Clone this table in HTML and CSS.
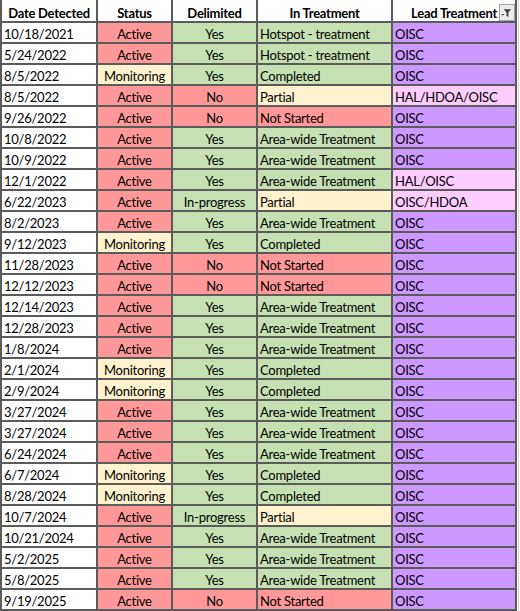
FILE: index.html
```html
<!DOCTYPE html>
<html lang="en">
<head>
<meta charset="utf-8">
<title>Detections</title>
<link rel="stylesheet" href="styles.css">
</head>
<body>
<div class="wrap">
<div class="sheet" role="table">
  <div class="cell head">Date Detected</div>
  <div class="cell head">Status</div>
  <div class="cell head">Delimited</div>
  <div class="cell head">In Treatment</div>
  <div class="cell head lead">Lead Treatment
    <span class="filter" aria-hidden="true"><svg width="16" height="17" viewBox="0 0 16 17"><path d="M2 10h4l-2 2z" fill="#555"/><path d="M5 5h8l-3 3.5v4.8l-2-1.2v-3.6z" fill="#3f3f3f"/></svg></span>
  </div>

  <div class="cell d">10/18/2021</div><div class="cell c red">Active</div><div class="cell c green">Yes</div><div class="cell l green">Hotspot - treatment</div><div class="cell l purple">OISC</div>
  <div class="cell d">5/24/2022</div><div class="cell c red">Active</div><div class="cell c green">Yes</div><div class="cell l green">Hotspot - treatment</div><div class="cell l purple">OISC</div>
  <div class="cell d">8/5/2022</div><div class="cell c yellow">Monitoring</div><div class="cell c green">Yes</div><div class="cell l green">Completed</div><div class="cell l purple">OISC</div>
  <div class="cell d">8/5/2022</div><div class="cell c red">Active</div><div class="cell c red">No</div><div class="cell l yellow">Partial</div><div class="cell l pink">HAL/HDOA/OISC</div>
  <div class="cell d">9/26/2022</div><div class="cell c red">Active</div><div class="cell c red">No</div><div class="cell l red">Not Started</div><div class="cell l purple">OISC</div>
  <div class="cell d">10/8/2022</div><div class="cell c red">Active</div><div class="cell c green">Yes</div><div class="cell l green">Area-wide Treatment</div><div class="cell l purple">OISC</div>
  <div class="cell d">10/9/2022</div><div class="cell c red">Active</div><div class="cell c green">Yes</div><div class="cell l green">Area-wide Treatment</div><div class="cell l purple">OISC</div>
  <div class="cell d">12/1/2022</div><div class="cell c red">Active</div><div class="cell c green">Yes</div><div class="cell l green">Area-wide Treatment</div><div class="cell l pink">HAL/OISC</div>
  <div class="cell d">6/22/2023</div><div class="cell c red">Active</div><div class="cell c green">In-progress</div><div class="cell l yellow">Partial</div><div class="cell l pink">OISC/HDOA</div>
  <div class="cell d">8/2/2023</div><div class="cell c red">Active</div><div class="cell c green">Yes</div><div class="cell l green">Area-wide Treatment</div><div class="cell l purple">OISC</div>
  <div class="cell d">9/12/2023</div><div class="cell c yellow">Monitoring</div><div class="cell c green">Yes</div><div class="cell l green">Completed</div><div class="cell l purple">OISC</div>
  <div class="cell d">11/28/2023</div><div class="cell c red">Active</div><div class="cell c red">No</div><div class="cell l red">Not Started</div><div class="cell l purple">OISC</div>
  <div class="cell d">12/12/2023</div><div class="cell c red">Active</div><div class="cell c red">No</div><div class="cell l red">Not Started</div><div class="cell l purple">OISC</div>
  <div class="cell d">12/14/2023</div><div class="cell c red">Active</div><div class="cell c green">Yes</div><div class="cell l green">Area-wide Treatment</div><div class="cell l purple">OISC</div>
  <div class="cell d">12/28/2023</div><div class="cell c red">Active</div><div class="cell c green">Yes</div><div class="cell l green">Area-wide Treatment</div><div class="cell l purple">OISC</div>
  <div class="cell d">1/8/2024</div><div class="cell c red">Active</div><div class="cell c green">Yes</div><div class="cell l green">Area-wide Treatment</div><div class="cell l purple">OISC</div>
  <div class="cell d">2/1/2024</div><div class="cell c yellow">Monitoring</div><div class="cell c green">Yes</div><div class="cell l green">Completed</div><div class="cell l purple">OISC</div>
  <div class="cell d">2/9/2024</div><div class="cell c yellow">Monitoring</div><div class="cell c green">Yes</div><div class="cell l green">Completed</div><div class="cell l purple">OISC</div>
  <div class="cell d">3/27/2024</div><div class="cell c red">Active</div><div class="cell c green">Yes</div><div class="cell l green">Area-wide Treatment</div><div class="cell l purple">OISC</div>
  <div class="cell d">3/27/2024</div><div class="cell c red">Active</div><div class="cell c green">Yes</div><div class="cell l green">Area-wide Treatment</div><div class="cell l purple">OISC</div>
  <div class="cell d">6/24/2024</div><div class="cell c red">Active</div><div class="cell c green">Yes</div><div class="cell l green">Area-wide Treatment</div><div class="cell l purple">OISC</div>
  <div class="cell d">6/7/2024</div><div class="cell c yellow">Monitoring</div><div class="cell c green">Yes</div><div class="cell l green">Completed</div><div class="cell l purple">OISC</div>
  <div class="cell d">8/28/2024</div><div class="cell c yellow">Monitoring</div><div class="cell c green">Yes</div><div class="cell l green">Completed</div><div class="cell l purple">OISC</div>
  <div class="cell d">10/7/2024</div><div class="cell c red">Active</div><div class="cell c green">In-progress</div><div class="cell l yellow">Partial</div><div class="cell l purple">OISC</div>
  <div class="cell d">10/21/2024</div><div class="cell c red">Active</div><div class="cell c green">Yes</div><div class="cell l green">Area-wide Treatment</div><div class="cell l purple">OISC</div>
  <div class="cell d">5/2/2025</div><div class="cell c red">Active</div><div class="cell c green">Yes</div><div class="cell l green">Area-wide Treatment</div><div class="cell l purple">OISC</div>
  <div class="cell d">5/8/2025</div><div class="cell c red">Active</div><div class="cell c green">Yes</div><div class="cell l green">Area-wide Treatment</div><div class="cell l purple">OISC</div>
  <div class="cell d">9/19/2025</div><div class="cell c red">Active</div><div class="cell c red">No</div><div class="cell l red">Not Started</div><div class="cell l purple">OISC</div>
</div>
<div class="edge"></div>
</div>
</body>
</html>
```

FILE: styles.css
```css
html, body {
  margin: 0;
  padding: 0;
  background: #fff;
}

.wrap {
  display: flex;
  align-items: stretch;
}

.sheet {
  display: grid;
  grid-template-columns: 94px 73px 83px 133px 122px;
  grid-template-rows: 21px;
  grid-auto-rows: 19px;
  gap: 2px;
  padding: 0 2px 2px 2px;
  background: #5b5b5b;
  font-family: Lato, "Open Sans", sans-serif;
  font-size: 13px;
  letter-spacing: -0.25px;
  color: #000;
}

.edge {
  width: 3px;
  background: linear-gradient(to right, #fff 0 1px, #d9d9d9 1px 2px, #fff 2px);
}

.cell {
  background: #fff;
  display: flex;
  align-items: flex-end;
  line-height: 16px;
  white-space: nowrap;
  overflow: hidden;
  padding: 0 2px;
}

.head {
  font-weight: 700;
  justify-content: center;
}

.lead {
  position: relative;
  overflow: visible;
}

.filter {
  position: absolute;
  right: 0;
  top: 4px;
  width: 16px;
  height: 17px;
  background: #ebebeb;
  border: 1px solid #a6a6a6;
  box-sizing: border-box;
  display: flex;
}

.filter svg {
  display: block;
  margin: -1px 0 0 -1px;
}

.d { justify-content: flex-start; }
.c { justify-content: center; }
.l { justify-content: flex-start; }

.red { background: #ff9999; }
.green { background: #c6e0b4; }
.yellow { background: #fff2cc; }
.purple { background: #cc99ff; }
.pink { background: #ffccff; }
```
